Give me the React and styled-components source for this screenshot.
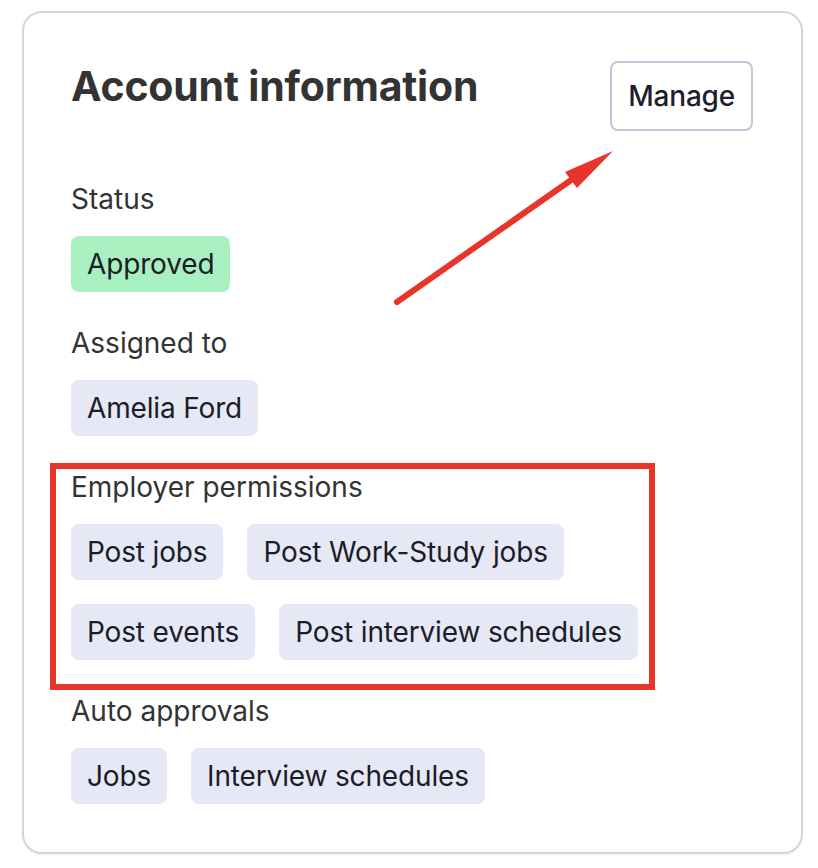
import React from 'react';
import styled, { createGlobalStyle } from 'styled-components';

const GlobalStyle = createGlobalStyle`
  html, body {
    margin: 0;
    padding: 0;
    background: #ffffff;
  }

  body {
    font-family: Inter, "Noto Sans", "Liberation Sans", sans-serif;
    color: #333333;
  }
`;

const Page = styled.div`
  padding: 11px 15px 15px 22px;
`;

const Card = styled.section`
  position: relative;
  box-sizing: border-box;
  width: 781px;
  padding: 48px 48px 48px 47px;
  border: 2px solid #d6d6d6;
  border-radius: 20px;
  background: #ffffff;
  box-shadow: 0 1px 2px rgba(0, 0, 0, 0.08);
`;

const Header = styled.header`
  display: flex;
  justify-content: space-between;
  align-items: flex-start;
`;

const Title = styled.h2`
  margin: 0;
  font-size: 41px;
  line-height: 50px;
  font-weight: 700;
  color: #333333;
  letter-spacing: -0.2px;
`;

const ManageButton = styled.button`
  padding: 15px 16px;
  border: 2px solid #c4c4d8;
  border-radius: 8px;
  background: #ffffff;
  font-family: inherit;
  font-size: 28px;
  line-height: 36px;
  font-weight: 500;
  letter-spacing: -0.2px;
  color: #1e1e2c;
  cursor: pointer;
`;

const Sections = styled.div`
  display: flex;
  flex-direction: column;
  gap: 33px;
  margin-top: 50px;
`;

const Section = styled.div`
  position: relative;
  display: flex;
  flex-direction: column;
  gap: 19px;
`;

const Highlighted = styled(Section)`
  &::after {
    content: '';
    position: absolute;
    top: -6px;
    left: -21px;
    right: 98px;
    bottom: -30px;
    border: 6px solid #e8352a;
    pointer-events: none;
  }
`;

const Label = styled.div`
  font-size: 28px;
  line-height: 36px;
  color: #333333;
`;

const PillRow = styled.div`
  display: flex;
  flex-wrap: wrap;
  gap: 24px;
`;

const Pill = styled.span`
  padding: 10px 16px;
  border-radius: 8px;
  background: ${(p) => (p.$tone === 'success' ? '#a8f0c0' : '#e6e8f6')};
  font-size: 28px;
  line-height: 36px;
  letter-spacing: -0.15px;
  color: #1c1c28;
`;

const Arrow = styled.svg`
  position: absolute;
  top: -2px;
  left: -2px;
  width: 781px;
  height: 842px;
  pointer-events: none;
`;

function Field({ label, items, tone, highlight }) {
  const Wrap = highlight ? Highlighted : Section;
  return (
    <Wrap>
      <Label>{label}</Label>
      <PillRow>
        {items.map((item) => (
          <Pill key={item} $tone={tone}>
            {item}
          </Pill>
        ))}
      </PillRow>
    </Wrap>
  );
}

export default function App() {
  return (
    <Page>
      <GlobalStyle />
      <Card>
        <Header>
          <Title>Account information</Title>
          <ManageButton>Manage</ManageButton>
        </Header>
        <Sections>
          <Field label="Status" items={['Approved']} tone="success" />
          <Field label="Assigned to" items={['Amelia Ford']} />
          <Field
            label="Employer permissions"
            items={['Post jobs', 'Post Work-Study jobs', 'Post events', 'Post interview schedules']}
            highlight
          />
          <Field label="Auto approvals" items={['Jobs', 'Interview schedules']} />
        </Sections>
        <Arrow viewBox="0 0 781 842">
          <line
            x1="375"
            y1="291"
            x2="552"
            y2="167"
            stroke="#e8352a"
            strokeWidth="6"
            strokeLinecap="round"
          />
          <polygon points="591,140 543,161 555,177" fill="#e8352a" />
        </Arrow>
      </Card>
    </Page>
  );
}
